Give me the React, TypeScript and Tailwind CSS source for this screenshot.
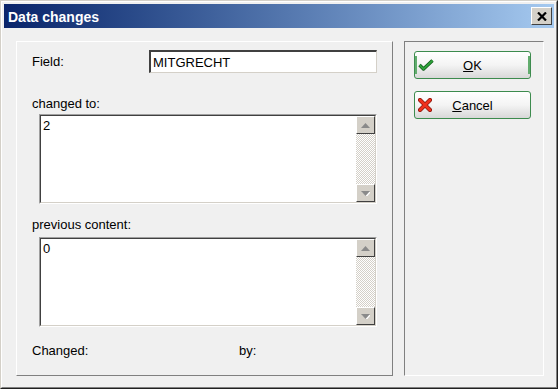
import React from "react";

const font = { fontFamily: '"Liberation Sans", Arial, sans-serif' };

function ScrollArrow({ dir }: { dir: "up" | "down" }) {
  return (
    <div className="w-[19px] h-[18px] bg-[#d4d0c8] border-t border-l border-t-white border-l-white border-b border-r border-b-[#404040] border-r-[#404040] flex items-center justify-center">
      <svg width="9" height="5" viewBox="0 0 9 5">
        {dir === "up" ? (
          <polygon points="0,5 9,5 4.5,0" fill="#8a8a8a" />
        ) : (
          <>
            <polygon points="1,1 10,1 5.5,6" fill="#ffffff" />
            <polygon points="0,0 9,0 4.5,5" fill="#8a8a8a" />
          </>
        )}
      </svg>
    </div>
  );
}

function TextBox({ value }: { value: string }) {
  return (
    <div className="h-[90px] border border-t-[#a0a0a0] border-l-[#a0a0a0] border-b-white border-r-white">
      <div className="h-full flex border border-t-[#404040] border-l-[#404040] border-b-[#d4d0c8] border-r-[#d4d0c8] bg-white">
        <div className="flex-1 pl-[2px] pt-[2px] text-[13px] leading-[15px] text-black">{value}</div>
        <div className="w-[19px] flex flex-col bg-[repeating-conic-gradient(#d4d0c8_0%_25%,#ffffff_0%_50%)] bg-[length:2px_2px]">
          <ScrollArrow dir="up" />
          <div className="flex-1" />
          <ScrollArrow dir="down" />
        </div>
      </div>
    </div>
  );
}

function Button({ label, icon, isDefault }: { label: React.ReactNode; icon: React.ReactNode; isDefault?: boolean }) {
  return (
    <div className="relative h-[28px] w-[117px] rounded-[3px] border border-[#3d8b4e] bg-gradient-to-b from-white via-[#f4f4f4] to-[#d8d8d8] flex items-center">
      {isDefault && (
        <>
          <div className="absolute left-0 top-[4px] bottom-[4px] w-[2px] bg-[#62ad6e]" />
          <div className="absolute right-0 top-[4px] bottom-[4px] w-[2px] bg-[#62ad6e]" />
        </>
      )}
      <div className="absolute left-[3px] top-0 bottom-0 flex items-center">{icon}</div>
      <div className="flex-1 text-center text-[13px] leading-[15px] text-black">{label}</div>
    </div>
  );
}

export default function App() {
  return (
    <div style={font} className="w-[558px] h-[389px] bg-[#f0f0f0]">
      <div className="w-full h-full border border-t-[#d4d0c8] border-l-[#d4d0c8] border-b-[#202020] border-r-[#202020]">
        <div className="w-full h-full border border-t-white border-l-white border-b-[#808080] border-r-[#808080] p-[2px] flex flex-col">
          {/* title bar */}
          <div className="h-[24px] flex items-center bg-gradient-to-r from-[#0a246a] to-[#a6caf0] pl-[4px] pr-[2px]">
            <span className="flex-1 text-white font-bold text-[14px] leading-[16px] mt-[1px]">Data changes</span>
            <div className="w-[21px] h-[18px] bg-[#d4d0c8] border border-t-white border-l-white border-b-[#404040] border-r-[#404040] flex items-center justify-center">
              <svg width="10" height="9" viewBox="0 0 10 9">
                <path d="M1 0.5 L9 8.5 M9 0.5 L1 8.5" stroke="#000" strokeWidth="2.2" />
              </svg>
            </div>
          </div>

          {/* body */}
          <div className="flex-1 flex gap-[11px] pl-[12px] pt-[13px] pb-[9px]">
            {/* left group */}
            <div className="w-[377px] h-[335px] border border-t-white border-l-white border-b-[#808080] border-r-[#808080] pl-[15px] pr-[15px] text-[13px] leading-[15px] text-black">
              <div className="flex items-center mt-[8px]">
                <div className="w-[117px]">Field:</div>
                <div className="flex-1 h-[23px] border border-t-[#404040] border-l-[#404040] border-b-[#d4d0c8] border-r-[#d4d0c8] bg-white pl-[2px] flex items-center border-t-2 border-l-2">
                  MITGRECHT
                </div>
              </div>

              <div className="mt-[23px]">changed to:</div>
              <div className="mt-[3px] pl-[7px]">
                <TextBox value="2" />
              </div>

              <div className="mt-[13px]">previous content:</div>
              <div className="mt-[5px] pl-[7px]">
                <TextBox value="0" />
              </div>

              <div className="mt-[16px] flex">
                <div className="w-[207px]">Changed:</div>
                <div>by:</div>
              </div>
            </div>

            {/* right group */}
            <div className="w-[140px] h-[335px] border border-t-[#808080] border-l-[#808080] border-b-white border-r-white pl-[9px] pt-[9px] flex flex-col gap-[12px]">
              <Button
                isDefault
                label={
                  <>
                    <span className="underline">O</span>K
                  </>
                }
                icon={
                  <svg width="16" height="12" viewBox="0 0 16 12">
                    <path d="M1.5 6 L5.5 10 L14.5 1.5" fill="none" stroke="#0d5a17" strokeWidth="3.4" strokeLinejoin="round" />
                    <path d="M1.5 6 L5.5 10 L14.5 1.5" fill="none" stroke="#2fa23b" strokeWidth="1.8" strokeLinejoin="round" />
                  </svg>
                }
              />
              <div className="h-[29px]">
                <Button
                  label={
                    <>
                      <span className="underline">C</span>ancel
                    </>
                  }
                  icon={
                    <svg width="14" height="14" viewBox="0 0 14 14">
                      <path d="M2 2 L12 12 M12 2 L2 12" stroke="#8a1a10" strokeWidth="4.2" strokeLinecap="round" />
                      <path d="M2 2 L12 12 M12 2 L2 12" stroke="#f0301c" strokeWidth="2.6" strokeLinecap="round" />
                    </svg>
                  }
                />
              </div>
            </div>
          </div>
        </div>
      </div>
    </div>
  );
}
